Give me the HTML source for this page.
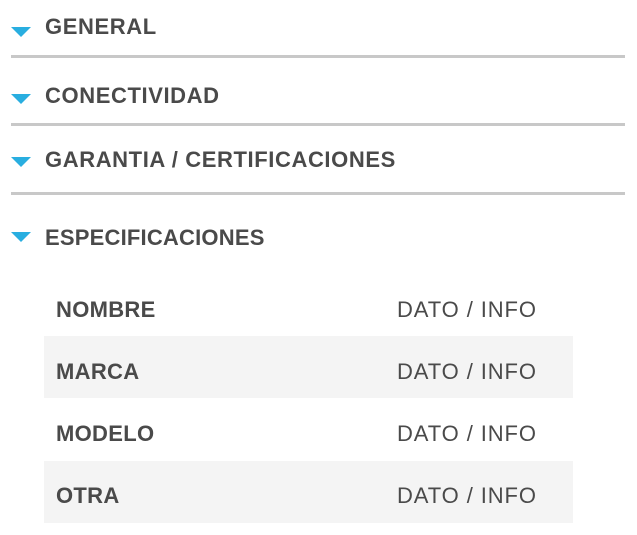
<!DOCTYPE html>
<html><head><style>
body{margin:0;width:637px;height:535px;background:#fff;font-family:"Liberation Sans",sans-serif;color:#4a4a4a;position:relative;overflow:hidden}
.h{position:absolute;left:45px;font-weight:bold;font-size:22px;line-height:24px;letter-spacing:0.6px;white-space:nowrap}
.t{position:absolute;left:11px;width:0;height:0;border-left:10px solid transparent;border-right:10px solid transparent;border-top:10px solid #29aee0}
.l{position:absolute;left:11px;width:614px;height:3px;background:#c8c8c8}
.r{position:absolute;left:44px;width:529px;height:62px}
.r.s{background:#f4f4f4}
.k{position:absolute;left:12px;top:20px;font-weight:bold;font-size:22px;line-height:24px;letter-spacing:0.3px}
.v{position:absolute;left:353px;top:20px;font-size:22px;line-height:24px;letter-spacing:0.9px}
</style></head><body>
<div class="t" style="top:27px"></div><div class="h" style="top:15px">GENERAL</div>
<div class="l" style="top:55px"></div>
<div class="t" style="top:94px"></div><div class="h" style="top:84px">CONECTIVIDAD</div>
<div class="l" style="top:123px"></div>
<div class="t" style="top:157px"></div><div class="h" style="top:148px">GARANTIA / CERTIFICACIONES</div>
<div class="l" style="top:192px"></div>
<div class="t" style="top:232px"></div><div class="h" style="top:226px;letter-spacing:0.2px">ESPECIFICACIONES</div>
<div class="r" style="top:278px"><div class="k">NOMBRE</div><div class="v">DATO / INFO</div></div>
<div class="r s" style="top:336px"><div class="k" style="top:24px">MARCA</div><div class="v" style="top:24px">DATO / INFO</div></div>
<div class="r" style="top:398px"><div class="k" style="top:24px">MODELO</div><div class="v" style="top:24px">DATO / INFO</div></div>
<div class="r s" style="top:461px"><div class="k" style="top:23px">OTRA</div><div class="v" style="top:23px">DATO / INFO</div></div>
</body></html>
